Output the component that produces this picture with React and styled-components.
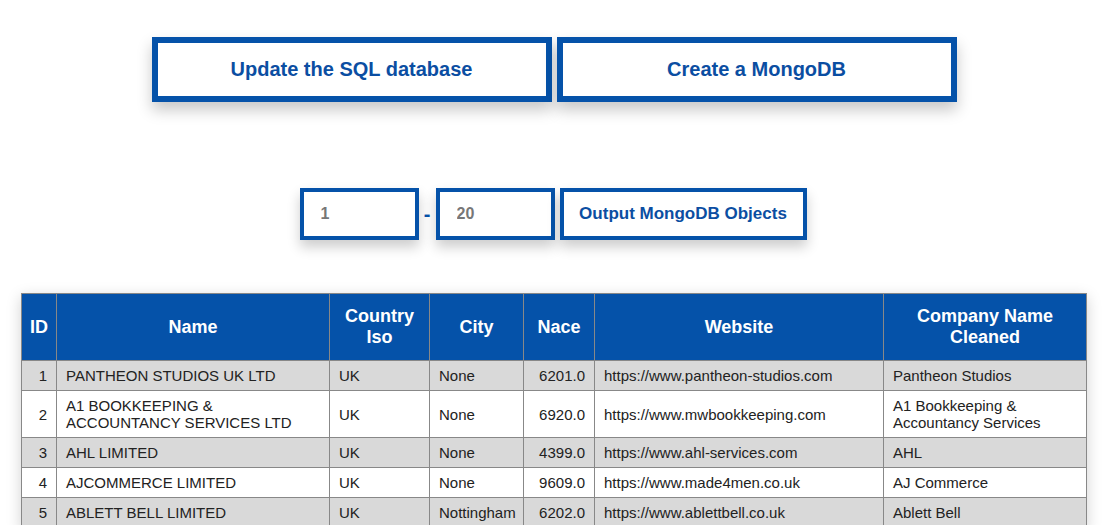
import React, { useState } from 'react';
import styled, { createGlobalStyle } from 'styled-components';

const GlobalStyle = createGlobalStyle`
    body {
        margin: 0;
        background: #ffffff;
        font-family: "Liberation Sans", Arial, sans-serif;
    }
`;

const BLUE = '#0552a9';

const PageWrapper = styled.div`
    display: flex;
    flex-direction: column;
    align-items: center;
    padding-top: 37px;
`;

const ActionRow = styled.div`
    display: flex;
    gap: 5px;
`;

const BigButton = styled.button`
    width: 400px;
    height: 65px;
    box-sizing: border-box;
    border: 6px solid ${BLUE};
    background: #ffffff;
    color: #0b4ea2;
    font-family: "Liberation Sans", Arial, sans-serif;
    font-size: 20px;
    font-weight: bold;
    box-shadow: 0 8px 14px rgba(0, 0, 0, 0.22);
    cursor: pointer;
`;

const RangeRow = styled.div`
    display: flex;
    align-items: center;
    margin-top: 86px;
    margin-left: -2px;
`;

const RangeInput = styled.input`
    width: 119px;
    height: 52px;
    box-sizing: border-box;
    border: 4px solid ${BLUE};
    padding: 0 0 0 17px;
    font-family: "Liberation Sans", Arial, sans-serif;
    font-size: 16px;
    font-weight: bold;
    color: #777777;
    outline: none;
    box-shadow: 0 7px 12px rgba(0, 0, 0, 0.2);
`;

const Dash = styled.span`
    width: 17px;
    text-align: center;
    color: ${BLUE};
    font-size: 20px;
    font-weight: bold;
`;

const OutputButton = styled.button`
    margin-left: 5px;
    width: 247px;
    height: 52px;
    box-sizing: border-box;
    border: 4px solid ${BLUE};
    background: #ffffff;
    color: #0b4ea2;
    font-family: "Liberation Sans", Arial, sans-serif;
    font-size: 17px;
    font-weight: bold;
    box-shadow: 0 7px 12px rgba(0, 0, 0, 0.2);
    cursor: pointer;
`;

const Table = styled.table`
    margin-top: 53px;
    width: 1065px;
    table-layout: fixed;
    border-collapse: collapse;
    border: 1px solid #888888;
    box-shadow: 0 4px 14px rgba(0, 0, 0, 0.18);
    font-size: 15px;
    color: #222222;
`;

const HeadCell = styled.th`
    background: ${BLUE};
    color: #ffffff;
    font-size: 18px;
    font-weight: bold;
    line-height: 21px;
    padding: 12px 4px;
    border: 1px solid #888888;
    text-align: center;
`;

const Row = styled.tr`
    background: ${p => (p.$odd ? '#d9d9d9' : '#ffffff')};
`;

const Cell = styled.td`
    border: 1px solid #888888;
    padding: 6px 9px;
    line-height: 17px;
    text-align: ${p => (p.$right ? 'right' : 'left')};
`;

const columns = [
    { label: 'ID', w: 35 },
    { label: 'Name', w: 273 },
    { label: 'Country Iso', w: 100 },
    { label: 'City', w: 94 },
    { label: 'Nace', w: 71 },
    { label: 'Website', w: 289 },
    { label: 'Company Name Cleaned', w: 203 },
];

const rows = [
    [1, 'PANTHEON STUDIOS UK LTD', 'UK', 'None', '6201.0', 'https://www.pantheon-studios.com', 'Pantheon Studios'],
    [2, 'A1 BOOKKEEPING & ACCOUNTANCY SERVICES LTD', 'UK', 'None', '6920.0', 'https://www.mwbookkeeping.com', 'A1 Bookkeeping & Accountancy Services'],
    [3, 'AHL LIMITED', 'UK', 'None', '4399.0', 'https://www.ahl-services.com', 'AHL'],
    [4, 'AJCOMMERCE LIMITED', 'UK', 'None', '9609.0', 'https://www.made4men.co.uk', 'AJ Commerce'],
    [5, 'ABLETT BELL LIMITED', 'UK', 'Nottingham', '6202.0', 'https://www.ablettbell.co.uk', 'Ablett Bell'],
];

function App() {
    const [from, setFrom] = useState('1');
    const [to, setTo] = useState('20');

    return (
        <PageWrapper>
            <GlobalStyle />
            <ActionRow>
                <BigButton>Update the SQL database</BigButton>
                <BigButton>Create a MongoDB</BigButton>
            </ActionRow>

            <RangeRow>
                <RangeInput value={from} onChange={e => setFrom(e.target.value)} />
                <Dash>-</Dash>
                <RangeInput value={to} onChange={e => setTo(e.target.value)} />
                <OutputButton>Output MongoDB Objects</OutputButton>
            </RangeRow>

            <Table>
                <colgroup>
                    {columns.map(c => (
                        <col key={c.label} width={c.w} />
                    ))}
                </colgroup>
                <thead>
                    <tr>
                        {columns.map(c => (
                            <HeadCell key={c.label}>{c.label}</HeadCell>
                        ))}
                    </tr>
                </thead>
                <tbody>
                    {rows.map((r, i) => (
                        <Row key={r[0]} $odd={i % 2 === 0}>
                            <Cell $right>{r[0]}</Cell>
                            <Cell>{r[1]}</Cell>
                            <Cell>{r[2]}</Cell>
                            <Cell>{r[3]}</Cell>
                            <Cell $right>{r[4]}</Cell>
                            <Cell>{r[5]}</Cell>
                            <Cell>{r[6]}</Cell>
                        </Row>
                    ))}
                </tbody>
            </Table>
        </PageWrapper>
    );
}

export default App;
